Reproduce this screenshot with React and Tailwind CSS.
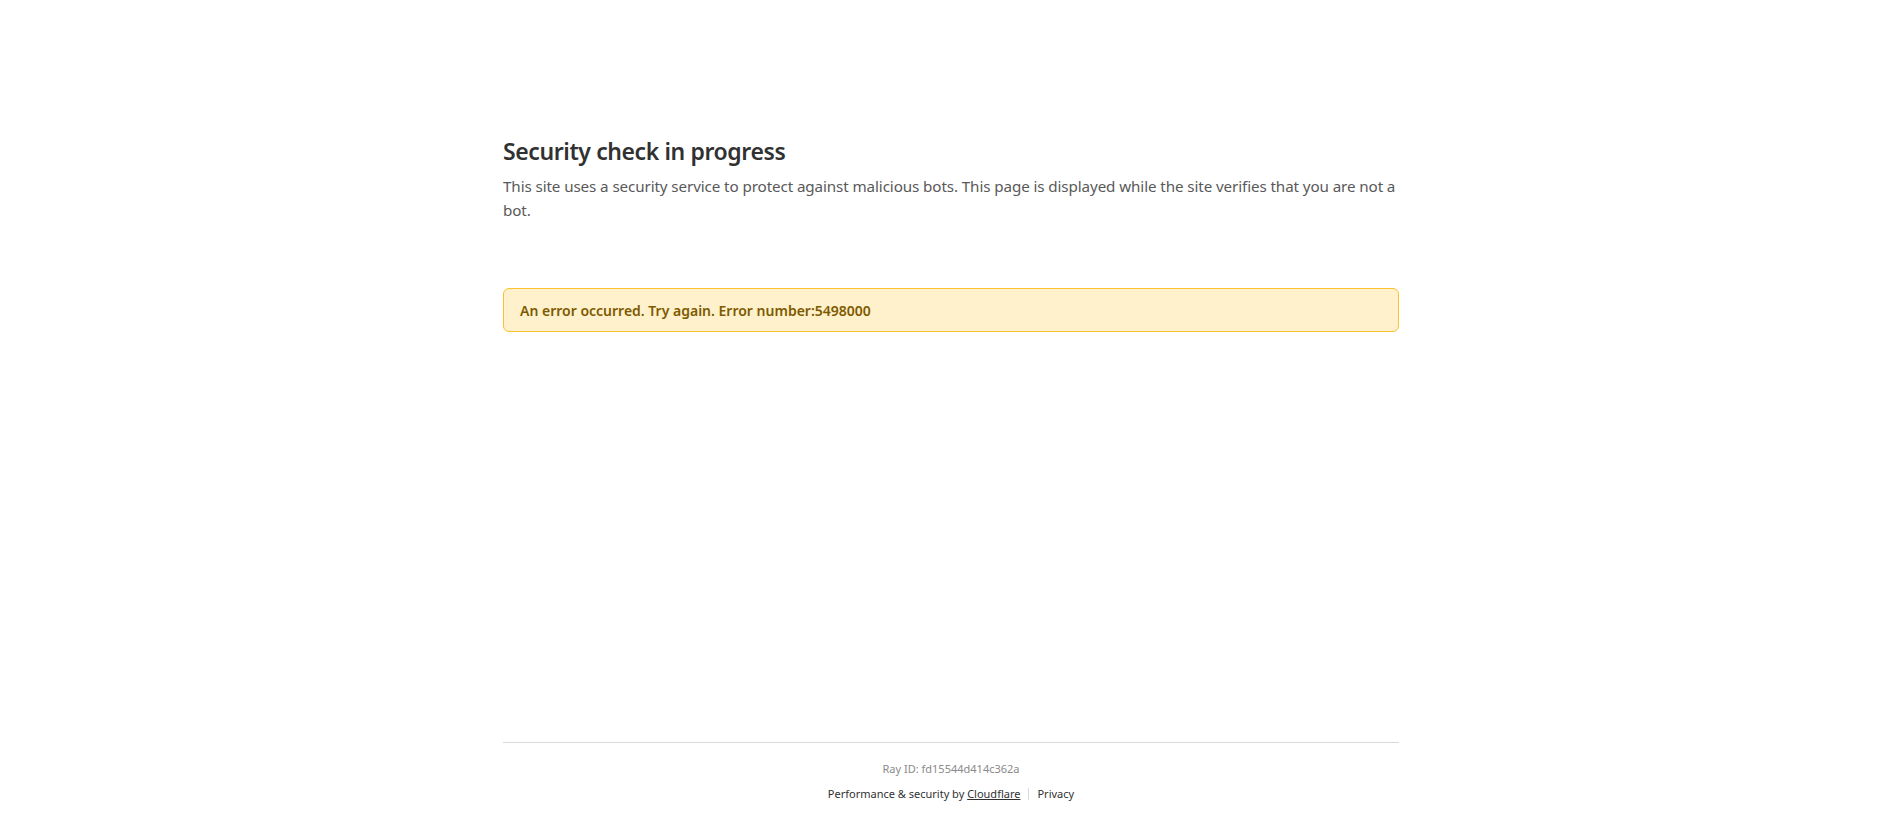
export default function App() {
  const font = { fontFamily: '"Noto Sans", "Open Sans", sans-serif' };
  return (
    <div className="min-h-[818px] bg-white flex flex-col" style={font}>
      <main className="w-[896px] mx-auto flex-1 pt-[136px]">
        <h1 className="text-[23px] leading-[30px] font-semibold text-[#313131] tracking-[-0.4px]">
          Security check in progress
        </h1>
        <p className="mt-[8px] text-[15.2px] leading-[24px] text-[#595959] tracking-[-0.1px]">
          This site uses a security service to protect against malicious bots. This page is displayed while the site verifies that you are not a bot.
        </p>
        <div className="mt-[66px] h-[44px] flex items-center px-4 rounded-[6px] border border-[#f8c32c] bg-[#fef1cc]">
          <span className="text-[14px] font-semibold text-[#7d5a00]">
            An error occurred. Try again. Error number:5498000
          </span>
        </div>
      </main>
      <footer className="w-[896px] mx-auto border-t border-[#d9d9d9] pt-[18px] pb-[16px] flex flex-col items-center">
        <div className="text-[11px] leading-[16px] text-[#8a8a8a]">Ray ID: fd15544d414c362a</div>
        <div className="mt-[9px] flex items-center text-[11px] leading-[16px] text-[#313131]">
          <span>
            Performance &amp; security by <a className="underline" href="#">Cloudflare</a>
          </span>
          <span className="mx-[8px] w-px h-[12px] bg-[#d9d9d9]" />
          <a href="#">Privacy</a>
        </div>
      </footer>
    </div>
  );
}
